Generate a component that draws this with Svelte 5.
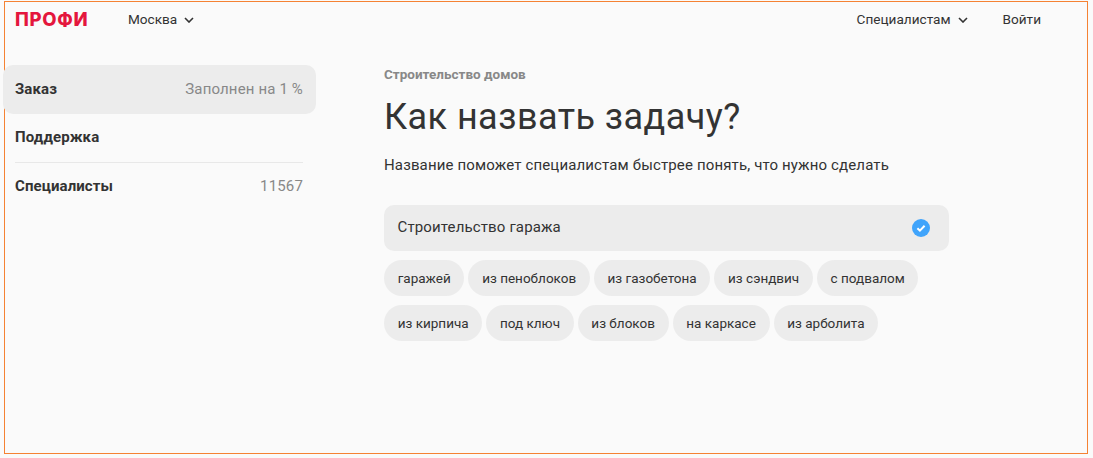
<script>
	const chips = [
		'гаражей',
		'из пеноблоков',
		'из газобетона',
		'из сэндвич',
		'с подвалом',
		'из кирпича',
		'под ключ',
		'из блоков',
		'на каркасе',
		'из арболита'
	];
</script>

<div class="frame">
	<header class="topbar">
		<div class="logo">ПРОФИ</div>
		<button class="link city">
			Москва
			<svg width="10" height="6" viewBox="0 0 10 6"><path d="M1 1l4 4 4-4" /></svg>
		</button>
		<div class="spacer"></div>
		<button class="link">
			Специалистам
			<svg width="10" height="6" viewBox="0 0 10 6"><path d="M1 1l4 4 4-4" /></svg>
		</button>
		<button class="link login">Войти</button>
	</header>

	<div class="page">
		<aside class="side">
			<div class="side-item active">
				<b>Заказ</b>
				<span>Заполнен на 1 %</span>
			</div>
			<div class="side-item">
				<b>Поддержка</b>
			</div>
			<div class="divider"></div>
			<div class="side-item">
				<b>Специалисты</b>
				<span>11567</span>
			</div>
		</aside>

		<main class="content">
			<div class="category">Строительство домов</div>
			<h1>Как назвать задачу?</h1>
			<p>Название поможет специалистам быстрее понять, что нужно сделать</p>

			<div class="field">
				<span>Строительство гаража</span>
				<svg width="18" height="18" viewBox="0 0 18 18">
					<circle cx="9" cy="9" r="9" fill="#40a4fb" />
					<path d="M5.4 9.3l2.5 2.4 4.7-5" fill="none" stroke="#fff" stroke-width="2" />
				</svg>
			</div>

			<div class="chips">
				{#each chips as chip}
					<button class="chip">{chip}</button>
				{/each}
			</div>
		</main>
	</div>
</div>

<style>
	:global(body) {
		background: #fafafa;
		font-family: Roboto, 'Liberation Sans', sans-serif;
		color: #333;
	}

	.frame {
		box-sizing: border-box;
		height: 453px;
		margin: 1px 5px 0 4px;
		border: 1px solid #f58233;
		position: relative;
	}

	.topbar {
		display: flex;
		align-items: center;
		height: 34px;
		padding: 0 46px 0 10px;
	}

	.logo {
		width: 113px;
		color: #e4163d;
		font-family: Inter, Roboto, sans-serif;
		font-size: 18.5px;
		font-weight: 800;
		letter-spacing: 0.7px;
	}

	.link {
		display: flex;
		align-items: center;
		gap: 7px;
		padding: 0;
		border: none;
		background: none;
		color: inherit;
		font: inherit;
		font-size: 13.6px;
	}

	.link svg {
		margin-top: 1px;
	}

	.link path {
		fill: none;
		stroke: #333;
		stroke-width: 1.6;
	}

	.spacer {
		flex: 1;
	}

	.login {
		margin-left: 35px;
	}

	.page {
		display: flex;
		padding-top: 29px;
	}

	.side {
		width: 313px;
		margin-left: -2px;
		margin-right: 68px;
	}

	.side-item {
		display: flex;
		align-items: center;
		justify-content: space-between;
		box-sizing: border-box;
		height: 48px;
		padding: 0 13px 2px 12px;
		border-radius: 10px;
		font-size: 15px;
		letter-spacing: 0.1px;
	}

	.side-item b {
		font-weight: 700;
	}

	.side-item span {
		color: #888;
		letter-spacing: 0.15px;
	}

	.active {
		height: 49px;
		background: #ececec;
	}

	.divider {
		height: 1px;
		margin: 0 13px 0 12px;
		background: #e8e8e8;
	}

	.content {
		flex: 1;
		padding-top: 2px;
	}

	.category {
		color: #888;
		font-size: 13.5px;
		font-weight: 700;
		line-height: 15px;
	}

	h1 {
		margin: 12px 0 0;
		font-size: 36px;
		font-weight: 400;
		letter-spacing: 0.45px;
		line-height: 46px;
	}

	p {
		margin: 15px 0 0;
		font-size: 15px;
		letter-spacing: 0.14px;
		line-height: 20px;
	}

	.field {
		display: flex;
		align-items: center;
		justify-content: space-between;
		box-sizing: border-box;
		width: 565px;
		height: 46px;
		margin-top: 30px;
		padding: 0 19px 2px 13.5px;
		border-radius: 10px;
		background: #ececec;
		font-size: 15px;
		letter-spacing: 0.14px;
	}

	.field svg {
		margin-top: 2px;
	}

	.chips {
		display: flex;
		flex-wrap: wrap;
		gap: 9px 4px;
		width: 565px;
		margin-top: 9px;
	}

	.chip {
		height: 36px;
		padding: 0 13.7px;
		border: none;
		border-radius: 18px;
		background: #ececec;
		color: inherit;
		font: inherit;
		font-size: 13.5px;
	}
</style>
